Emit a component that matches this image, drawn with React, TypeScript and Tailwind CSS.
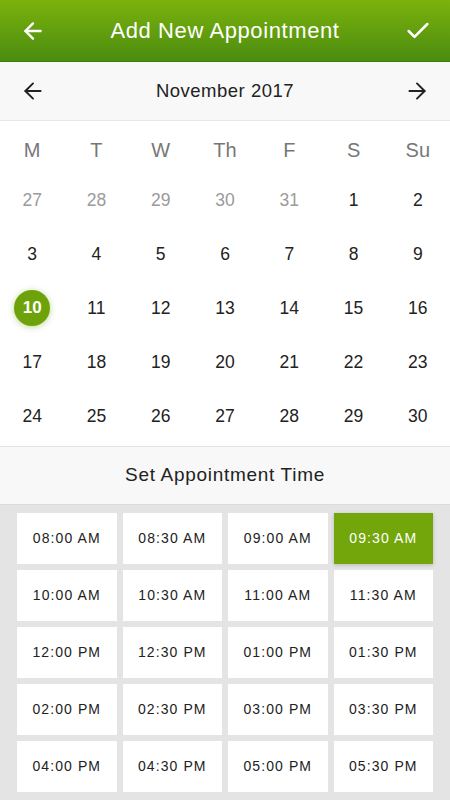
import { ArrowLeft, ArrowRight, Check } from "lucide-react";

const weekdays = ["M", "T", "W", "Th", "F", "S", "Su"];

const days = [
  27, 28, 29, 30, 31, 1, 2,
  3, 4, 5, 6, 7, 8, 9,
  10, 11, 12, 13, 14, 15, 16,
  17, 18, 19, 20, 21, 22, 23,
  24, 25, 26, 27, 28, 29, 30,
];

const times = [
  "08:00 AM", "08:30 AM", "09:00 AM", "09:30 AM",
  "10:00 AM", "10:30 AM", "11:00 AM", "11:30 AM",
  "12:00 PM", "12:30 PM", "01:00 PM", "01:30 PM",
  "02:00 PM", "02:30 PM", "03:00 PM", "03:30 PM",
  "04:00 PM", "04:30 PM", "05:00 PM", "05:30 PM",
];

const App = () => {
  return (
    <div className="w-[450px] h-[800px] overflow-hidden bg-white flex flex-col font-['Liberation_Sans',Arial,sans-serif]">
      {/* header */}
      <div className="h-[62px] shrink-0 flex items-center justify-between px-[20px] bg-gradient-to-b from-[#7cb20c] to-[#4a8c0f] border-b border-[#3f7d0c] text-white">
        <ArrowLeft size={26} strokeWidth={2.2} />
        <span className="text-[22px] tracking-[0.6px]">Add New Appointment</span>
        <Check size={28} strokeWidth={2.2} className="mr-[-2px]" />
      </div>

      {/* month bar */}
      <div className="h-[59px] shrink-0 flex items-center justify-between px-[20px] bg-[#f8f8f8] border-b border-[#e6e6e6] text-[#222]">
        <ArrowLeft size={26} strokeWidth={1.8} />
        <span className="text-[18.5px] tracking-[0.5px]">November 2017</span>
        <ArrowRight size={26} strokeWidth={1.8} />
      </div>

      {/* calendar */}
      <div className="shrink-0 border-b border-[#e4e4e4] pb-[3px]">
        <div className="grid grid-cols-7 h-[52px] pt-[6px]">
          {weekdays.map((d) => (
            <div key={d} className="flex items-center justify-center text-[20px] text-[#777]">
              {d}
            </div>
          ))}
        </div>
        <div className="grid grid-cols-7">
          {days.map((d, i) => {
            const muted = i < 5;
            const selected = i === 14;
            return (
              <div key={i} className="h-[54px] flex items-center justify-center">
                {selected ? (
                  <span className="w-[36px] h-[36px] rounded-full bg-[#6ea20a] text-white text-[17px] font-bold flex items-center justify-center shadow-[0_1px_6px_rgba(110,162,10,0.45)]">
                    {d}
                  </span>
                ) : (
                  <span className={muted ? "text-[17.5px] text-[#9a9a9a]" : "text-[17.5px] text-[#222]"}>
                    {d}
                  </span>
                )}
              </div>
            );
          })}
        </div>
      </div>

      {/* time section */}
      <div className="h-[58px] shrink-0 flex items-center justify-center bg-[#f8f8f8] border-b border-[#dcdcdc] text-[19px] text-[#222] tracking-[0.7px]">
        Set Appointment Time
      </div>

      <div className="flex-1 bg-[#e4e4e4] px-[17px] pt-[8px]">
        <div className="grid grid-cols-4 gap-[6px]">
          {times.map((t) =>
            t === "09:30 AM" ? (
              <div key={t} className="h-[51px] flex items-center justify-center bg-[#72a60a] text-white text-[14px] tracking-[1.1px] shadow-[0_1px_4px_rgba(0,0,0,0.2)]">
                {t}
              </div>
            ) : (
              <div key={t} className="h-[51px] flex items-center justify-center bg-white text-[#222] text-[14px] tracking-[1.1px]">
                {t}
              </div>
            )
          )}
        </div>
      </div>
    </div>
  );
};

export default App;
